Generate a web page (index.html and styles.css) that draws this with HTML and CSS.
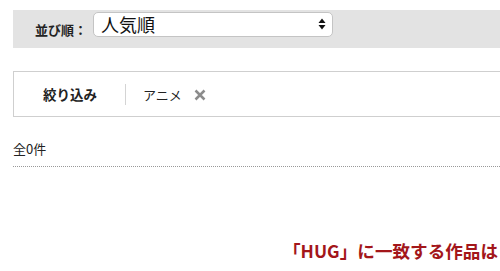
FILE: index.html
```html
<!DOCTYPE html>
<html lang="ja">
<head>
    <meta charset="UTF-8">
    <title>検索結果</title>
    <link rel="stylesheet" href="styles.css">
</head>
<body>
    <div class="page">
        <div class="sort-bar">
            <span class="sort-label">並び順：</span>
            <div class="sort-select">
                <span class="sort-value">人気順</span>
                <svg class="sort-arrows" width="8" height="12" viewBox="0 0 8 12">
                    <path d="M4 0.5 L7.5 5 L0.5 5 Z" fill="#111"/>
                    <path d="M4 11.5 L7.5 7 L0.5 7 Z" fill="#111"/>
                </svg>
            </div>
        </div>

        <div class="filter-box">
            <span class="filter-title">絞り込み</span>
            <span class="filter-divider"></span>
            <span class="filter-tag">アニメ</span>
            <svg class="filter-remove" width="12" height="12" viewBox="0 0 12 12">
                <path d="M1.5 1.5 L10.5 10.5 M10.5 1.5 L1.5 10.5" stroke="#8c8c8c" stroke-width="2.5"/>
            </svg>
        </div>

        <div class="result-count">全0件</div>

        <div class="no-result">「HUG」に一致する作品は</div>
    </div>
</body>
</html>
```

FILE: styles.css
```css
* {
    margin: 0;
    padding: 0;
    box-sizing: border-box;
}

html, body {
    overflow: hidden;
}

body {
    font-family: "Noto Sans CJK JP", "Noto Sans", sans-serif;
    background: #fff;
    color: #222;
}

.page {
    margin-left: 13px;
    margin-right: -20px;
}

.sort-bar {
    margin-top: 10px;
    height: 38px;
    background: #e3e3e3;
    display: flex;
    align-items: center;
    padding-left: 22px;
}

.sort-label {
    font-size: 13px;
    font-weight: 700;
    color: #222;
    width: 58px;
}

.sort-select {
    width: 240px;
    height: 25px;
    margin-top: -10px;
    background: #fff;
    border: 1px solid #c4c4c4;
    border-radius: 5px;
    display: flex;
    align-items: center;
    justify-content: space-between;
    padding: 0 6px 0 7px;
}

.sort-value {
    font-size: 18px;
    color: #111;
    line-height: 1;
}

.filter-box {
    margin-top: 23px;
    height: 46px;
    border: 1.5px solid #cfcfcf;
    display: flex;
    align-items: center;
    padding-left: 29px;
}

.filter-title {
    font-size: 13.5px;
    font-weight: 700;
    color: #222;
}

.filter-divider {
    width: 1px;
    height: 21px;
    background: #d4d4d4;
    margin: 0 17px 0 28px;
}

.filter-tag {
    font-size: 13px;
    color: #222;
}

.filter-remove {
    margin-left: 12px;
    margin-top: 2px;
}

.result-count {
    margin-top: 22px;
    font-size: 13px;
    color: #222;
    padding-bottom: 8px;
    border-bottom: 1px dotted #999;
}

.no-result {
    margin-top: 71px;
    padding-left: 270px;
    font-size: 17.6px;
    font-weight: 700;
    color: #a3161a;
    white-space: nowrap;
}
```
